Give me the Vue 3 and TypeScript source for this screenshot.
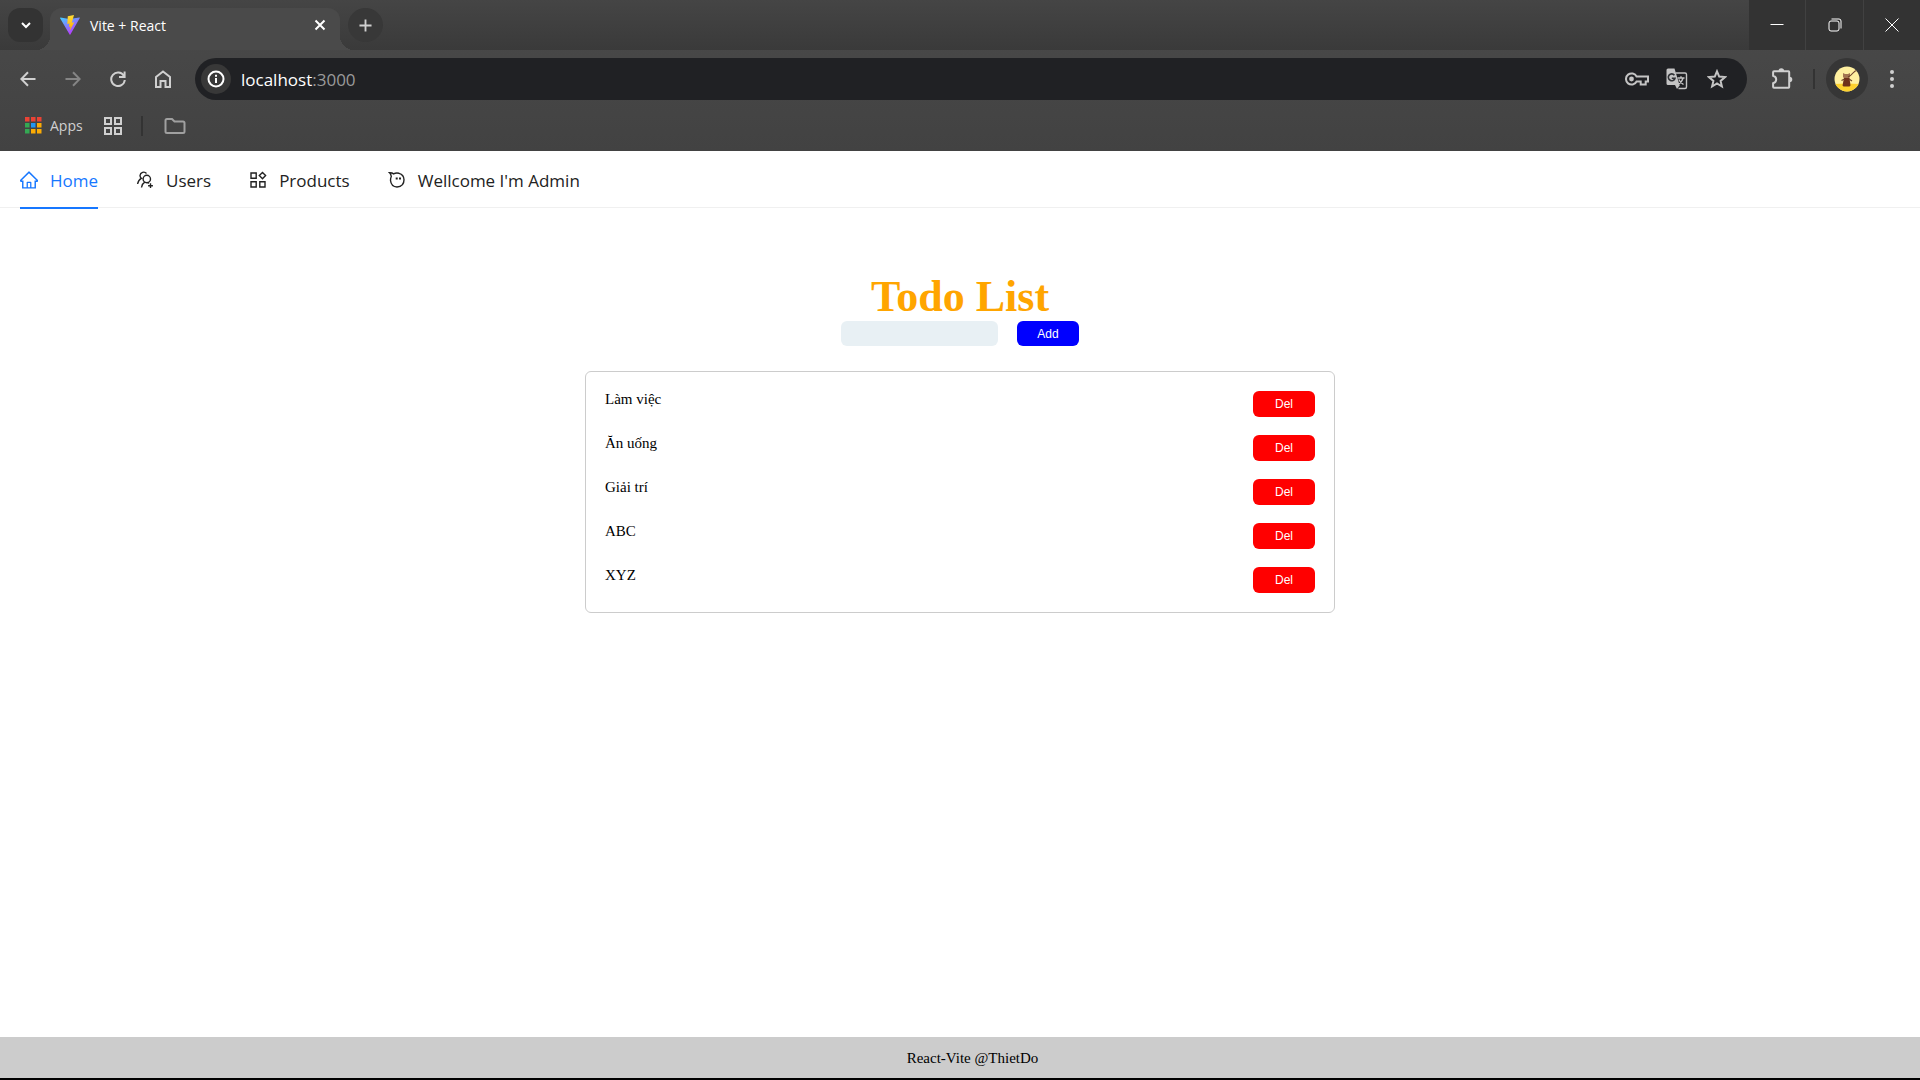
<script setup lang="ts">
import { ref } from 'vue'

interface Todo {
  id: number
  name: string
}

const todos = ref<Todo[]>([
  { id: 1, name: 'Làm việc' },
  { id: 2, name: 'Ăn uống' },
  { id: 3, name: 'Giải trí' },
  { id: 4, name: 'ABC' },
  { id: 5, name: 'XYZ' },
])
const draft = ref('')

function addTodo(): void {
  const name = draft.value.trim()
  if (!name) return
  todos.value.push({ id: Date.now(), name })
  draft.value = ''
}

function removeTodo(id: number): void {
  todos.value = todos.value.filter((todo) => todo.id !== id)
}

const appColors = ['#ea4335', '#ea4335', '#ea4335', '#34a853', '#2196f3', '#fbab04', '#34a853', '#fbab04', '#fbab04']
</script>

<template>
  <div class="screen">
    <header class="browser">
      <div class="strip">
        <button class="tab-search" type="button" aria-label="Search tabs">
          <svg width="12" height="12" viewBox="0 0 12 12"><path d="M2 4l4 4 4-4" class="line" /></svg>
        </button>
        <div class="tab">
          <svg class="favicon" width="20" height="20" viewBox="0 0 20 20">
            <defs>
              <linearGradient id="wedge" x1="0" y1="0" x2=".6" y2="1">
                <stop offset="0" stop-color="#41d1ff" />
                <stop offset="1" stop-color="#bd34fe" />
              </linearGradient>
              <linearGradient id="bolt" x1="0" y1="0" x2="0" y2="1">
                <stop offset="0" stop-color="#ffdd35" />
                <stop offset="1" stop-color="#ffa800" />
              </linearGradient>
            </defs>
            <path d="M.4 2.6L9.4 4l10-1.6q.6 0 .4.6L10.4 19.4q-.4.5-.8 0L.1 3.2q-.2-.6.3-.6z" fill="url(#wedge)" />
            <path d="M14 .1L7.8 1.300l-.5 7.700 2.200-.4-.6 3.200 1.600-.4-.9 4.600 4.700-8.700-2.500.4z" fill="url(#bolt)" />
          </svg>
          <span class="tab-title">Vite + React</span>
          <button class="tab-close" type="button" aria-label="Close tab">
            <svg width="12" height="12" viewBox="0 0 12 12"><path d="M1.5 1.5l9 9M10.5 1.5l-9 9" class="line" /></svg>
          </button>
        </div>
        <button class="tab-new" type="button" aria-label="New tab">
          <svg width="13" height="13" viewBox="0 0 14 14"><path d="M7 .5v13M.5 7h13" class="line" /></svg>
        </button>
        <div class="window-controls">
          <button type="button" aria-label="Minimize">
            <svg width="14" height="14" viewBox="0 0 14 14"><path d="M.5 6.500h13" class="line thin" /></svg>
          </button>
          <button type="button" aria-label="Restore">
            <svg width="14" height="14" viewBox="0 0 14 14">
              <rect x="1" y="3" width="10" height="10" rx="2" class="line thin" />
              <path d="M3.5 1H11q2 0 2 2v7.500" class="line thin" />
            </svg>
          </button>
          <button type="button" aria-label="Close">
            <svg width="14" height="14" viewBox="0 0 14 14"><path d="M.5.5l13 13M13.5.5l-13 13" class="line thin" /></svg>
          </button>
        </div>
      </div>

      <div class="toolbar">
        <button class="tool" type="button" aria-label="Back">
          <svg width="16" height="16" viewBox="0 0 16 16"><path d="M15.5 8H1.500M8 1.300L1.300 8 8 14.700" class="line" /></svg>
        </button>
        <button class="tool dim" type="button" aria-label="Forward">
          <svg width="16" height="16" viewBox="0 0 16 16"><path d="M.5 8h14M8 1.300L14.700 8 8 14.700" class="line" /></svg>
        </button>
        <button class="tool" type="button" aria-label="Reload">
          <svg width="16" height="16" viewBox="0 0 16 16">
            <path d="M13.800 4.600A6.800 6.800 0 1 0 14.800 9M14.600.5v5.600H9" class="line" />
          </svg>
        </button>
        <button class="tool" type="button" aria-label="Home">
          <svg width="16" height="18" viewBox="0 0 16 18">
            <path d="M1 7L8 1.500 15 7v10h-4.500v-6h-5v6H1z" class="line" />
          </svg>
        </button>
        <div class="omnibox">
          <button class="site-info" type="button" aria-label="Site information">
            <svg width="18" height="18" viewBox="0 0 18 18">
              <circle cx="9" cy="9" r="7.5" class="line" />
              <path d="M9 8v5M9 4.800v2" class="line" />
            </svg>
          </button>
          <span class="address">localhost<span class="port">:3000</span></span>
          <button class="omni-tool" type="button" aria-label="Passwords">
            <svg width="24" height="14" viewBox="0 0 24 14">
              <path d="M11.600 4.500A5.600 5.600 0 1 0 11.600 9.500h4.100v3h5v-3H23v-5z" class="line" />
              <circle cx="6.5" cy="7" r="2.4" fill="currentColor" />
            </svg>
          </button>
          <button class="omni-tool" type="button" aria-label="Translate">
            <svg width="22" height="22" viewBox="0 0 22 22">
              <path d="M9.500 5H19q1.500 0 1.500 1.500v12.500q0 1.500-1.500 1.500h-6.500" class="line slim" />
              <path d="M2 .5h6.500l5 16.500H2Q.5 17 .5 15.500V2Q.5.500 2 .5zM9 17h5l-3 4z" fill="currentColor" />
              <path d="M8.400 7.200A3.400 3.400 0 1 0 9 10.200H5.800" fill="none" stroke="#303236" stroke-width="1.6" />
              <path d="M11.500 10h7M15 8.300V10M17 10.200q-1 4-4.500 6M12.800 11.500q1.500 3 4.700 5" class="line slim" />
            </svg>
          </button>
          <button class="omni-tool" type="button" aria-label="Bookmark this tab">
            <svg width="20" height="20" viewBox="0 0 20 20">
              <path d="M10 2.300l2.200 5.300 5.800.5-4.400 3.800 1.300 5.600-4.900-3-4.900 3 1.300-5.600L2 8.100l5.800-.5z" class="line" />
            </svg>
          </button>
        </div>
        <button class="tool extensions" type="button" aria-label="Extensions">
          <svg width="22" height="22" viewBox="0 0 22 22">
            <path d="M3 3.300h14.500q.7 0 .7.700v15q0 .7-.7.700H3q-.9 0-.9-.9v-3.600q3.100-1 3.100-3.700T2.100 7.800V4.200q0-.9.9-.9z" class="line" />
            <path d="M7.500 3a2.800 2.800 0 0 1 5.600 0zM18.500 8.700a2.800 2.800 0 0 1 0 5.600z" fill="currentColor" />
          </svg>
        </button>
        <span class="divider"></span>
        <button class="profile" type="button" aria-label="Profile">
          <svg width="26" height="26" viewBox="0 0 26 26">
            <defs><clipPath id="face"><circle cx="13" cy="13" r="12.5" /></clipPath></defs>
            <g clip-path="url(#face)">
              <path d="M0 0h26v26H0z" fill="#fff0a0" />
              <path d="M0 18q13-1 26 0v8H0z" fill="#fdd12e" />
              <path d="M9 7l2 1h3l2-1v4q-.5 1.500-3.500 1.500T9 11z" fill="#a37450" />
              <path d="M10 12h5.500l1 7.500-1 1h-6l-1-1z" fill="#6f301a" />
              <path d="M7.500 14.500l3-1.500M15 13l3 2M14 11q3-1.500 5-4t5-3" fill="none" stroke="#70452d" stroke-width="1.2" />
            </g>
          </svg>
        </button>
        <button class="tool menu" type="button" aria-label="Browser menu">
          <svg width="4" height="18" viewBox="0 0 4 18">
            <circle v-for="y in [2, 9, 16]" :key="y" cx="2" :cy="y" r="2" fill="currentColor" />
          </svg>
        </button>
      </div>

      <nav class="bookmarks" aria-label="Bookmarks">
        <a class="apps" href="#apps">
          <svg width="17" height="17" viewBox="0 0 17 17">
            <rect
              v-for="(color, i) in appColors"
              :key="i"
              :x="(i % 3) * 6"
              :y="Math.floor(i / 3) * 6"
              width="4.5"
              height="4.5"
              :fill="color"
            />
          </svg>
          Apps
        </a>
        <button class="mark" type="button" aria-label="Tab groups">
          <svg width="18" height="18" viewBox="0 0 18 18">
            <path d="M1 1h6v6H1zM11 1h6v6h-6zM1 11h6v6H1zM11 11h6v6h-6z" class="line" />
          </svg>
        </button>
        <span class="divider"></span>
        <button class="mark folder" type="button" aria-label="All bookmarks">
          <svg width="22" height="16" viewBox="0 0 22 16">
            <path d="M3 1h5l2.500 2.500H19q1.500 0 1.500 1.500v8.500q0 1.500-1.500 1.500H3q-1.500 0-1.500-1.500v-11Q1.500 1 3 1z" class="line" />
          </svg>
        </button>
      </nav>
    </header>

    <nav class="site-nav" aria-label="Main">
      <a class="nav-link active" href="#home">
        <svg width="18" height="18" viewBox="64 64 896 896" fill="currentColor">
          <path d="M946.500 505L560.100 118.800l-25.900-25.900a31.500 31.500 0 0 0-44.400 0L77.500 505a63.900 63.900 0 0 0-18.800 46c.4 35.200 29.700 63.300 64.900 63.300h42.500V940h691.800V614.300h43.400c17.100 0 33.200-6.700 45.300-18.800a63.600 63.600 0 0 0 18.700-45.300c0-17-6.700-33.100-18.800-45.200zM568 868H456V664h112v204zm217.900-325.700V868H632V640c0-22.100-17.900-40-40-40H432c-22.100 0-40 17.900-40 40v228H238.100V542.300h-96l370-369.700 23.100 23.100L882 542.300h-96.100z" />
        </svg>
        <span>Home</span>
      </a>
      <a class="nav-link" href="#users">
        <svg width="18" height="18" viewBox="0 0 18 18">
          <path d="M10.500 2.500A3.700 3.700 0 0 0 4 4.500q0 1.700 1.300 2.800Q2.200 9 1.600 13M14.500 8a3.700 3.700 0 1 0-7.400 0 3.700 3.700 0 0 0 7.400 0zM8.700 11.200Q6 12.800 5.500 16.500M11.500 11.700q.8 0 1.600.3M14.500 12.300v4.800M12.100 14.700h4.800" class="line slim" />
        </svg>
        <span>Users</span>
      </a>
      <a class="nav-link" href="#products">
        <svg width="18" height="18" viewBox="0 0 18 18">
          <path d="M2 2h5.200v5.200H2zM2 10.800h5.200V16H2zM10.800 10.800H16V16h-5.200zM13.500 1.400l3.100 3.200-3.100 3.200-3.200-3.200z" class="line slim" />
        </svg>
        <span>Products</span>
      </a>
      <a class="nav-link" href="#account">
        <svg width="18" height="18" viewBox="0 0 18 18">
          <path d="M1.600 1.700q2.500-.1 4 1.200Q8 1.500 11 2.300q5 1.500 5 6.500 0 6.800-7 7.200-5.800-.3-6.500-6.500Q2.500 7 3.300 5.500 3 3 1.600 1.700z" class="line slim" />
          <path d="M8.700 6.500v2M12 6.500v2" class="line" />
        </svg>
        <span>Wellcome I'm Admin</span>
      </a>
    </nav>

    <main class="content">
      <h1>Todo List</h1>
      <form class="entry" @submit.prevent="addTodo">
        <input v-model="draft" type="text" aria-label="New todo" />
        <button class="action add" type="submit">Add</button>
      </form>
      <ul class="todos">
        <li v-for="todo in todos" :key="todo.id">
          <span>{{ todo.name }}</span>
          <button class="action del" type="button" @click="removeTodo(todo.id)">Del</button>
        </li>
      </ul>
    </main>

    <footer class="footer">React-Vite @ThietDo</footer>
  </div>
</template>

<style>
body {
  margin: 0;
}
</style>

<style scoped>
.screen {
  display: flex;
  flex-direction: column;
  min-height: 100vh;
  box-sizing: border-box;
  border-bottom: 2px solid #000;
  background: #fff;
  color: #000;
  font-family: 'Liberation Serif', serif;
}

button {
  display: flex;
  align-items: center;
  justify-content: center;
  padding: 0;
  border: 0;
  background: none;
  color: inherit;
  font: inherit;
  cursor: pointer;
}

svg {
  flex: none;
}

.line {
  fill: none;
  stroke: currentColor;
  stroke-width: 2;
}

.line.slim {
  stroke-width: 1.4;
}

.line.thin {
  stroke-width: 1;
}

/* browser frame */
.browser {
  color: #d0d0d0;
  font-family: 'Open Sans', 'Noto Sans', sans-serif;
  background: linear-gradient(#4a4a4a, #424242);
}

.strip {
  display: flex;
  align-items: flex-end;
  height: 50px;
  padding-left: 8px;
  background: linear-gradient(#454545, #3a3a3a);
}

.tab-search,
.tab-new {
  width: 35px;
  height: 34px;
  margin-bottom: 8px;
  background: #333;
  border-radius: 12px;
  color: #fff;
}

.tab-new {
  margin-left: 8px;
  background: #383838;
  border-radius: 50%;
  color: #d0d0d0;
}

.tab {
  position: relative;
  display: flex;
  align-items: center;
  width: 290px;
  height: 42px;
  margin-left: 7px;
  padding: 0 14px 8px 10px;
  box-sizing: border-box;
  border-radius: 12px 12px 0 0;
  background: #4a4a4a;
  color: #fff;
}

.tab::before,
.tab::after {
  content: '';
  position: absolute;
  bottom: 0;
  width: 14px;
  height: 14px;
}

.tab::before {
  right: 100%;
  background: radial-gradient(circle at 0 0, transparent 14px, #4a4a4a 14px);
}

.tab::after {
  left: 100%;
  background: radial-gradient(circle at 100% 0, transparent 14px, #4a4a4a 14px);
}

.tab-title {
  flex: 1;
  margin-left: 10px;
  font-size: 14px;
}

.window-controls {
  display: flex;
  align-self: stretch;
  gap: 1px;
  margin-left: auto;
  background: #414141;
}

.window-controls button {
  width: 57px;
  background: #333;
  color: #fff;
}

.window-controls button:first-child,
.window-controls button:last-child {
  width: 56px;
}

.toolbar {
  display: flex;
  align-items: center;
  height: 58px;
  padding: 0 14px 0 5px;
}

.tool {
  width: 45px;
  height: 42px;
}

.tool.dim {
  color: #858585;
}

.tool.menu {
  width: 28px;
}

.extensions {
  margin-left: 12px;
}

.omnibox {
  display: flex;
  flex: 1;
  align-items: center;
  gap: 16px;
  height: 42px;
  margin-left: 10px;
  padding: 0 18px 0 6px;
  box-sizing: border-box;
  border-radius: 21px;
  background: #202124;
}

.site-info {
  width: 30px;
  height: 30px;
  margin-right: -6px;
  border-radius: 50%;
  background: #383838;
  color: #fff;
}

.address {
  flex: 1;
  color: #fff;
  font-size: 17px;
}

.port {
  color: #9a9a9a;
}

.omni-tool {
  width: 24px;
  height: 30px;
  color: #c4c4c4;
}

.divider {
  width: 2px;
  height: 20px;
  background: #333;
}

.toolbar .divider {
  margin: 0 11px 0 9px;
}

.profile {
  width: 42px;
  height: 42px;
  margin-right: 10px;
  border-radius: 50%;
  background: #363636;
}

.bookmarks {
  display: flex;
  align-items: center;
  height: 43px;
  padding: 0 25px 8px;
  box-sizing: border-box;
}

.apps {
  display: flex;
  align-items: center;
  gap: 8px;
  color: inherit;
  font-size: 14px;
  text-decoration: none;
}

.mark {
  margin: 0 19px 0 21px;
}

.folder {
  color: #a0a0a0;
}

/* application menu */
.site-nav {
  display: flex;
  gap: 38px;
  height: 57px;
  padding: 0 20px;
  box-sizing: border-box;
  border-bottom: 1px solid #f0f0f0;
  font-family: 'Open Sans', 'Noto Sans', sans-serif;
  font-size: 17px;
}

.nav-link {
  display: flex;
  align-items: center;
  gap: 12px;
  height: 58px;
  padding-top: 2px;
  box-sizing: border-box;
  border-bottom: 2px solid transparent;
  color: #222;
  text-decoration: none;
}

.nav-link.active {
  border-color: #1677ff;
  color: #1677ff;
}

/* todo page */
.content {
  display: flex;
  flex: 1;
  flex-direction: column;
  align-items: center;
  padding: 64px 20px 20px;
}

h1 {
  margin: 0;
  color: orange;
  font-size: 44px;
  line-height: 49px;
}

.entry {
  display: flex;
  gap: 19px;
}

.entry input {
  width: 157px;
  height: 25px;
  padding: 0 8px;
  box-sizing: border-box;
  border: 0;
  border-radius: 6px;
  background: #e8f0f4;
}

.action {
  width: 62px;
  height: 25px;
  border-radius: 6px;
  color: #fff;
  font-family: 'Liberation Sans', sans-serif;
  font-size: 12px;
}

.add {
  background: blue;
}

.del {
  height: 26px;
  background: red;
}

.todos {
  display: flex;
  flex-direction: column;
  gap: 18px;
  width: 100%;
  max-width: 750px;
  margin: 25px 0 0;
  padding: 19px;
  box-sizing: border-box;
  border: 1px solid #ccc;
  border-radius: 6px;
  list-style: none;
}

.todos li {
  display: flex;
  justify-content: space-between;
  font-size: 15px;
  line-height: 17px;
}

.footer {
  padding: 13px 0 11px 25px;
  background: #ccc;
  font-size: 15px;
  line-height: 17px;
  text-align: center;
}
</style>
